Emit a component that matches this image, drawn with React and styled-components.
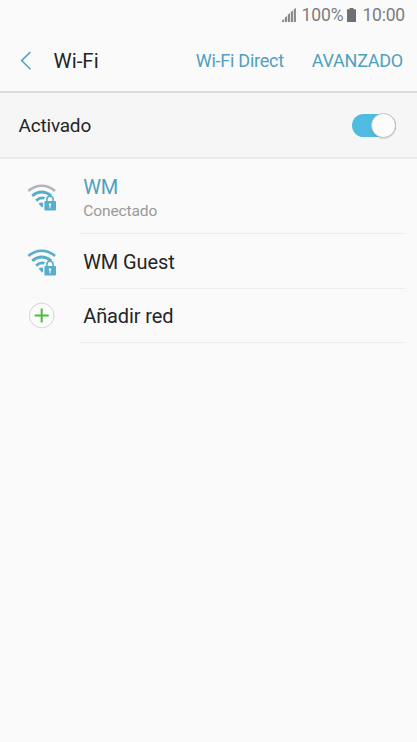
import React from 'react';
import styled, { createGlobalStyle } from 'styled-components';

const GlobalStyle = createGlobalStyle`
    * {
        box-sizing: border-box;
    }

    body {
        margin: 0;
        background: #fafafa;
        font-family: Roboto, sans-serif;
    }
`;

const networks = [
    { name: 'WM', status: 'Conectado', outer: '#b3b5b6' },
    { name: 'WM Guest', outer: '#58aeca' },
];

const WifiIcon = ({ outer }) => (
    <svg width='30' height='30' viewBox='0 0 30 30' fill='none'>
        <path d='M1.3 8.9Q14.7 -1.4 28.1 8.9' stroke={outer} strokeWidth='2.6' />
        <path
            d='M5.2 13.8Q14.7 6.2 24.2 13.8M9.2 18.6Q14.7 13.5 20.2 17.9'
            stroke='#58aeca'
            strokeWidth='2.8'
        />
        <path d='M11.5 21.8Q14 19.8 16.2 20.7V25.2H14.8Z' fill='#58aeca' />
        <path d='M16.3 29V18L19 14H26L29.6 17V29Z' fill='#fafafa' />
        <path
            d='M19.9 19.4V17.4A3.1 3.1 0 0 1 26.1 17.4V19.4'
            stroke='#58aeca'
            strokeWidth='1.6'
        />
        <rect x='17.4' y='19' width='11.6' height='9.5' rx='1' fill='#58aeca' />
        <circle cx='23' cy='22.4' r='1.2' fill='#fafafa' />
        <path d='M23 23V26.4' stroke='#fafafa' strokeWidth='1' />
    </svg>
);

const AddIcon = () => (
    <svg width='30' height='30' viewBox='0 0 30 30' fill='none'>
        <circle cx='14.7' cy='14.5' r='12.3' fill='#fcfcfc' stroke='#d4d4d4' />
        <path d='M7.7 14.5H21.7M14.7 7.5V21.5' stroke='#4bbb3a' strokeWidth='2' />
    </svg>
);

const BackIcon = () => (
    <svg width='12' height='20' viewBox='0 0 12 20' fill='none'>
        <path d='M10.4 1L1.6 9.6L10.4 18.2' stroke='#519fbf' strokeWidth='1.5' />
    </svg>
);

const SignalIcon = () => (
    <svg width='15' height='15' viewBox='0 0 15 15' fill='#858585'>
        <path d='M0 14V12.6L1.8 11V14ZM2.8 14V9.8L4.9 7.9V14ZM5.8 14V6.8L7.9 5V14ZM8.8 14V3.9L10.9 2.2V14ZM11.8 14V1.3L13.9 0V14Z' />
    </svg>
);

const BatteryIcon = () => (
    <svg width='9' height='14' viewBox='0 0 9 14' fill='#707070'>
        <path d='M2.5 0H6.5V1.2H9V14H0V1.2H2.5Z' />
    </svg>
);

export default function App() {
    return (
        <Screen>
            <GlobalStyle />
            <StatusBar>
                <SignalIcon />
                <Percent>100%</Percent>
                <BatteryIcon />
                <Clock>10:00</Clock>
            </StatusBar>
            <Header>
                <BackIcon />
                <Title>Wi-Fi</Title>
                <Action>Wi-Fi Direct</Action>
                <Action $last>AVANZADO</Action>
            </Header>
            <SwitchRow>
                <span>Activado</span>
                <Track>
                    <Thumb />
                </Track>
            </SwitchRow>
            {networks.map(({ name, status, outer }) => (
                <Row key={name} $tall={Boolean(status)}>
                    <IconSlot>
                        <WifiIcon outer={outer} />
                    </IconSlot>
                    <RowText $tall={Boolean(status)}>
                        <Name $active={Boolean(status)}>{name}</Name>
                        {status && <Status>{status}</Status>}
                    </RowText>
                </Row>
            ))}
            <Row>
                <IconSlot>
                    <AddIcon />
                </IconSlot>
                <RowText>
                    <Name>Añadir red</Name>
                </RowText>
            </Row>
        </Screen>
    );
}

const Screen = styled.div`
    height: 742px;
    background: #fafafa;
    color: #252525;
`;

const StatusBar = styled.div`
    display: flex;
    align-items: center;
    justify-content: flex-end;
    height: 30px;
    padding-right: 12px;
    font-size: 17.5px;
    line-height: 30px;
    color: #7d7d7d;
`;

const Percent = styled.span`
    margin: 0 4px;
    letter-spacing: -0.1px;
`;

const Clock = styled.span`
    margin-left: 6px;
    letter-spacing: -0.2px;
`;

const Header = styled.div`
    display: flex;
    align-items: center;
    height: 63px;
    padding: 0 14px 0 20px;
    border-bottom: 2px solid #dcdcdc;
`;

const Title = styled.h1`
    flex: 1;
    margin: 0 0 0 21.5px;
    font-size: 20.5px;
    font-weight: 400;
`;

const Action = styled.span`
    margin-left: ${({ $last }) => ($last ? '28px' : '0')};
    font-size: 18px;
    letter-spacing: -0.25px;
    color: #519fbf;
`;

const SwitchRow = styled.div`
    display: flex;
    align-items: center;
    justify-content: space-between;
    height: 66px;
    padding: 0 21px 0 18.5px;
    border-bottom: 2px solid #ebebeb;
    background: #f6f6f6;
    font-size: 19px;
    letter-spacing: -0.2px;
`;

const Track = styled.div`
    display: flex;
    align-items: center;
    justify-content: flex-end;
    width: 44px;
    height: 23px;
    border-radius: 12px;
    background: #50bbe0;
`;

const Thumb = styled.div`
    width: 25px;
    height: 25px;
    border: 1px solid #c6c6c6;
    border-radius: 50%;
    background: #fcfcfc;
    box-shadow: 0 1px 1px rgba(0, 0, 0, 0.15);
`;

const Row = styled.div`
    display: flex;
    height: ${({ $tall }) => ($tall ? '75px' : '54.5px')};
    padding: 0 12px 0 27px;
`;

const IconSlot = styled.div`
    display: flex;
    align-items: center;
    width: 53px;
    padding-top: 1px;
`;

const RowText = styled.div`
    display: flex;
    flex: 1;
    flex-direction: column;
    justify-content: center;
    padding: ${({ $tall }) => ($tall ? '4px' : '2px')} 0 0 3.2px;
    border-bottom: 1px solid #ececec;
`;

const Name = styled.div`
    font-size: 20px;
    line-height: 24px;
    letter-spacing: -0.1px;
    color: ${({ $active }) => ($active ? '#519fbf' : '#252525')};
`;

const Status = styled.div`
    margin-top: 2px;
    font-size: 15.5px;
    line-height: 20px;
    letter-spacing: -0.1px;
    color: #999999;
`;
